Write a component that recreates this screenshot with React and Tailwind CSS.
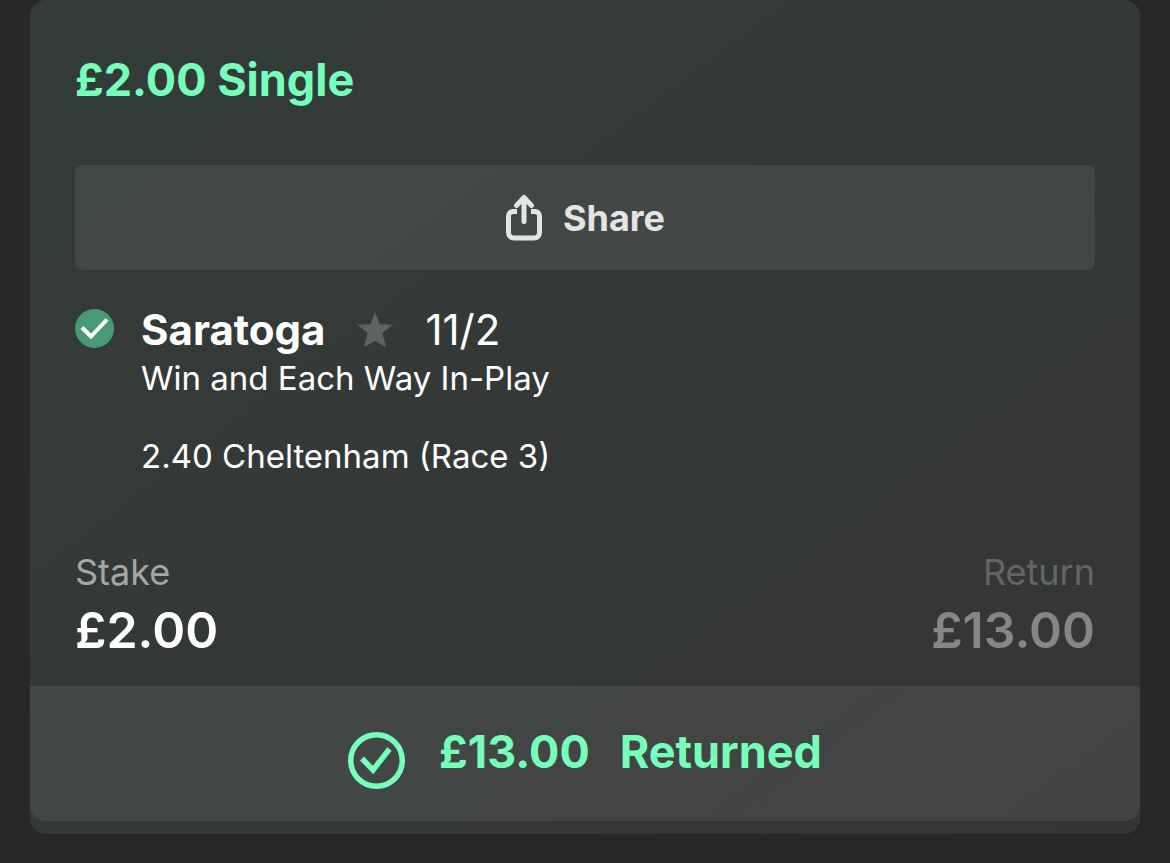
const ShareIcon = () => (
    <svg
        viewBox="0 0 38 48"
        className="h-12 w-[38px]"
        fill="none"
        stroke="currentColor"
        strokeWidth="5"
        strokeLinecap="round"
        strokeLinejoin="round"
        aria-hidden="true"
    >
        <path
            strokeLinecap="butt"
            d="M12 17.500H8a4.500 4.500 0 0 0-4.500 4.500V38.500A5.500 5.500 0 0 0 9 44h20a5.500 5.500 0 0 0 5.500-5.500V22A4.500 4.500 0 0 0 30 17.500h-4"
        />
        <path d="M19 27.500V4.500M11.500 11.500 19 3.500l7.500 8" />
    </svg>
);

const WonIcon = () => (
    <svg viewBox="0 0 40 40" className="h-10 w-10" role="img" aria-label="Won">
        <circle cx="19.500" cy="19.500" r="19.500" fill="#479a73" />
        <path
            d="M7 18.500 16 27.500 32 10.500"
            fill="none"
            stroke="#ffffff"
            strokeWidth="4"
        />
    </svg>
);

const StarIcon = () => (
    <svg
        viewBox="0 0 36 36"
        className="h-9 w-9"
        fill="#5f6463"
        aria-hidden="true"
    >
        <path d="M18 0 22.600 12.200 35.700 12.700 25.400 21.100 29 35 18 29 7 35 10.600 21.100.3 12.700 13.400 12.200Z" />
    </svg>
);

const ReturnedIcon = () => (
    <svg
        viewBox="0 0 57 57"
        className="h-[57px] w-[57px]"
        fill="none"
        stroke="currentColor"
        strokeWidth="5.500"
        aria-hidden="true"
    >
        <circle cx="28.500" cy="28.500" r="25.750" />
        <path d="M14 26.500 25 38 41.500 17" />
    </svg>
);

const bet = {
    type: "£2.00 Single",
    selection: "Saratoga",
    odds: "11/2",
    market: "Win and Each Way In-Play",
    event: "2.40 Cheltenham (Race 3)",
    stake: "£2.00",
    returned: "£13.00",
};

export default function App() {
    return (
        <div className="min-h-screen bg-[#282828] px-[30px] pb-[29px] font-['Inter',sans-serif] text-white">
            <article className="rounded-2xl bg-linear-to-br from-[#333c39] via-[#343837] via-60% to-[#353535] pb-[13px]">
                <div className="px-[45px] pt-14 pb-6">
                    <h1 className="text-[45px] leading-[48px] font-bold text-[#75ffba]">
                        {bet.type}
                    </h1>

                    <button className="mt-[61px] flex h-[105px] w-full items-center justify-center gap-5 rounded-lg bg-white/7 text-4xl font-bold text-[#e3e5e4]">
                        <ShareIcon />
                        Share
                    </button>

                    {/* Selection */}
                    <section className="mt-9 flex gap-[26px]">
                        <div className="pt-[3px]">
                            <WonIcon />
                        </div>
                        <div className="text-[33px] leading-[48px]">
                            <div className="flex items-center text-[42px]">
                                <h2 className="font-bold">{bet.selection}</h2>
                                <button
                                    aria-label="Favourite"
                                    className="mx-8"
                                >
                                    <StarIcon />
                                </button>
                                <span>{bet.odds}</span>
                            </div>
                            <p>{bet.market}</p>
                            <p className="mt-[30px]">{bet.event}</p>
                        </div>
                    </section>

                    {/* Stake and return */}
                    <dl className="mt-[68px] flex justify-between">
                        <div>
                            <dt className="text-4xl leading-[48px] text-[#a4a7a6]">
                                Stake
                            </dt>
                            <dd className="mt-0.5 text-[50px] leading-[64px] font-semibold">
                                {bet.stake}
                            </dd>
                        </div>
                        <div className="text-right">
                            <dt className="text-4xl leading-[48px] text-[#646665]">
                                Return
                            </dt>
                            <dd className="mt-0.5 text-[50px] leading-[64px] font-semibold text-[#858686]">
                                {bet.returned}
                            </dd>
                        </div>
                    </dl>
                </div>

                <footer className="flex items-start justify-center rounded-b-2xl bg-white/7 pt-[46px] pb-8 text-[45px] leading-10 font-bold text-[#75ffba]">
                    <ReturnedIcon />
                    <span className="ml-[34px]">{bet.returned}</span>
                    <span className="ml-[30px]">Returned</span>
                </footer>
            </article>
        </div>
    );
}
